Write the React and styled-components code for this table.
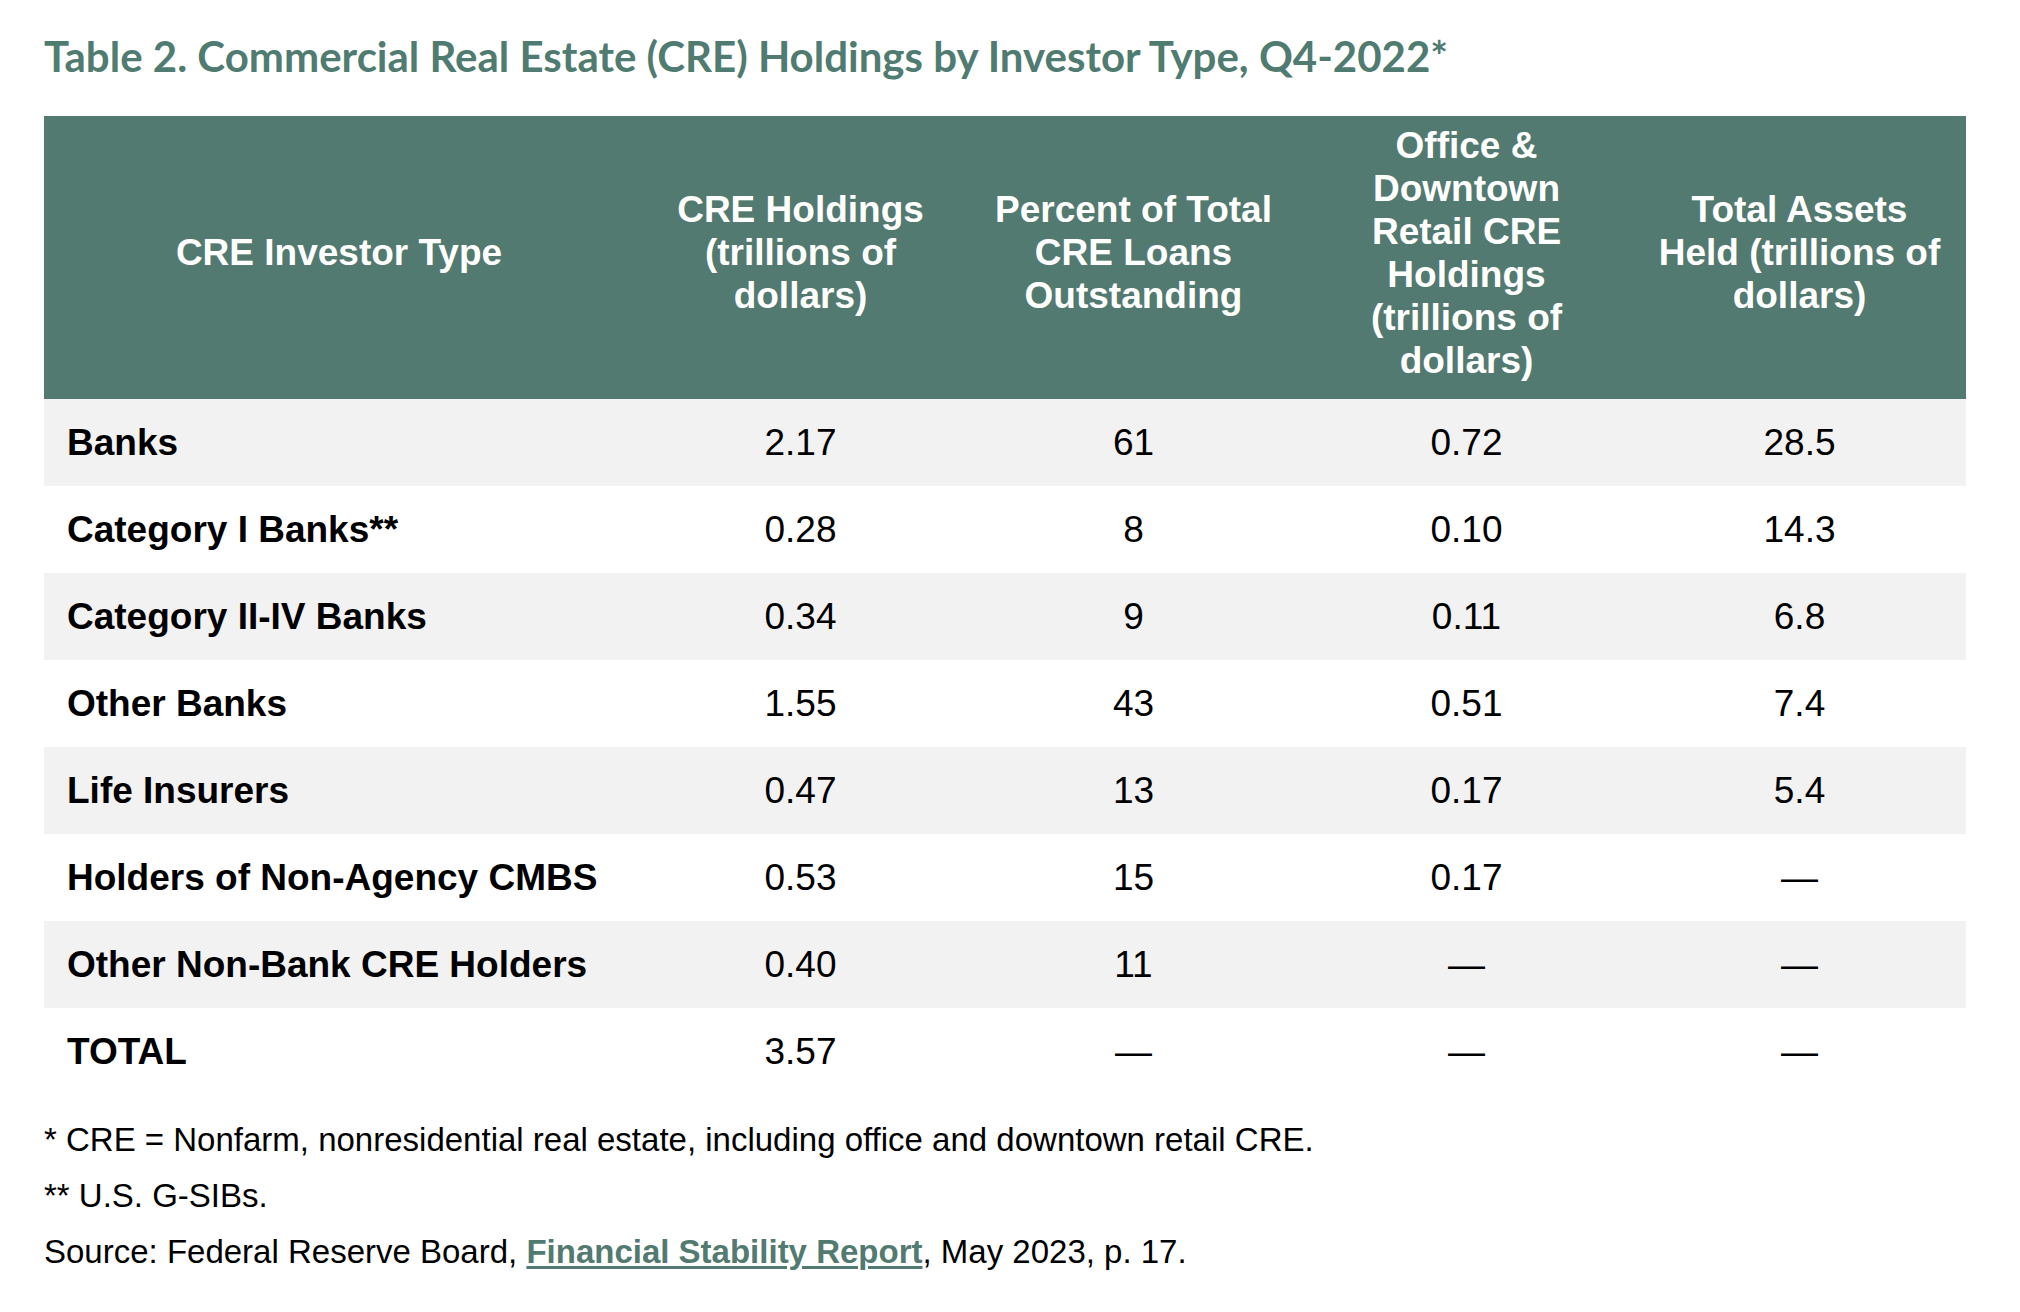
import React from 'react';
import styled, { createGlobalStyle } from 'styled-components';

const GlobalStyle = createGlobalStyle`
  html, body {
    margin: 0;
    padding: 0;
    background: #ffffff;
  }
`;

const Page = styled.div`
  padding: 32px 54px 0 44px;
  font-family: 'Liberation Sans', Arial, Helvetica, sans-serif;
  color: #000;
`;

const Title = styled.h1`
  margin: 0 0 36px;
  font-family: Lato, 'Open Sans', sans-serif;
  font-weight: 700;
  font-size: 42px;
  line-height: 48px;
  color: #4f7b70;
`;

const Table = styled.table`
  width: 1922px;
  border-collapse: collapse;
  table-layout: fixed;
`;

const HeadCell = styled.th`
  height: 273px;
  padding: 0 12px 10px;
  background: #527a70;
  color: #ffffff;
  font-size: 37px;
  line-height: 43px;
  font-weight: 700;
  text-align: center;
  vertical-align: middle;
`;

const Row = styled.tr`
  height: 87px;
  background: ${(p) => (p.$shaded ? '#f2f2f2' : '#ffffff')};
`;

const NameCell = styled.td`
  padding: 0 0 0 23px;
  font-size: 37px;
  font-weight: 700;
  text-align: left;
  vertical-align: middle;
`;

const ValueCell = styled.td`
  padding: 0;
  font-size: 37px;
  font-weight: 400;
  text-align: center;
  vertical-align: middle;
`;

const Notes = styled.div`
  margin-top: 17px;
`;

const Note = styled.p`
  margin: 0;
  font-size: 33px;
  line-height: 56px;
`;

const SourceLink = styled.a`
  color: #527a70;
  font-weight: 700;
  text-decoration: underline;
  text-decoration-thickness: 3px;
  text-underline-offset: 3px;
`;

const D = '\u2014';

const rows = [
  ['Banks', '2.17', '61', '0.72', '28.5'],
  ['Category I Banks**', '0.28', '8', '0.10', '14.3'],
  ['Category II-IV Banks', '0.34', '9', '0.11', '6.8'],
  ['Other Banks', '1.55', '43', '0.51', '7.4'],
  ['Life Insurers', '0.47', '13', '0.17', '5.4'],
  ['Holders of Non-Agency CMBS', '0.53', '15', '0.17', D],
  ['Other Non-Bank CRE Holders', '0.40', '11', D, D],
  ['TOTAL', '3.57', D, D, D],
];

const headers = [
  ['CRE Investor Type'],
  ['CRE Holdings', '(trillions of', 'dollars)'],
  ['Percent of Total', 'CRE Loans', 'Outstanding'],
  ['Office &', 'Downtown', 'Retail CRE', 'Holdings', '(trillions of', 'dollars)'],
  ['Total Assets', 'Held (trillions of', 'dollars)'],
];

export default function App() {
  return (
    <>
      <GlobalStyle />
      <Page>
        <Title>Table 2. Commercial Real Estate (CRE) Holdings by Investor Type, Q4-2022*</Title>
        <Table>
          <colgroup>
            <col style={{ width: 590 }} />
            <col />
            <col />
            <col />
            <col />
          </colgroup>
          <thead>
            <tr>
              {headers.map((lines, i) => (
                <HeadCell key={i}>
                  {lines.map((l, j) => (
                    <React.Fragment key={j}>
                      {j > 0 && <br />}
                      {l}
                    </React.Fragment>
                  ))}
                </HeadCell>
              ))}
            </tr>
          </thead>
          <tbody>
            {rows.map((r, i) => (
              <Row key={r[0]} $shaded={i % 2 === 0}>
                <NameCell>{r[0]}</NameCell>
                {r.slice(1).map((v, j) => (
                  <ValueCell key={j}>{v}</ValueCell>
                ))}
              </Row>
            ))}
          </tbody>
        </Table>
        <Notes>
          <Note>* CRE = Nonfarm, nonresidential real estate, including office and downtown retail CRE.</Note>
          <Note>** U.S. G-SIBs.</Note>
          <Note>
            Source: Federal Reserve Board, <SourceLink href="#">Financial Stability Report</SourceLink>, May 2023, p. 17.
          </Note>
        </Notes>
      </Page>
    </>
  );
}
